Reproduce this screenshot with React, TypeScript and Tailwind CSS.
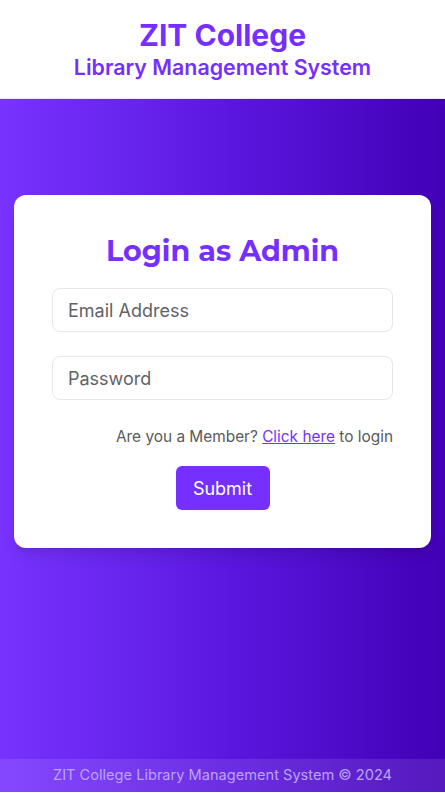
export default function App() {
  return (
    <div className="min-h-[793px] flex flex-col bg-white" style={{ fontFamily: "Inter, 'Liberation Sans', sans-serif" }}>
      {/* Header */}
      <header className="h-[99px] bg-white flex flex-col items-center justify-center border-b border-[#e9e4ff]">
        <h1 className="text-[30px] leading-[36px] font-bold text-[#7530ff] mt-[-2px]">ZIT College</h1>
        <h2 className="text-[21.4px] leading-[26px] font-semibold text-[#7530ff] mt-[1px]">Library Management System</h2>
      </header>

      <main className="flex-1 flex flex-col bg-linear-to-r from-[#7833ff] via-[#5c17e0] to-[#4200b6]">
        <div className="flex-1 px-[14px] pt-[96px]">
          <div className="bg-white rounded-[12px] h-[353px] flex flex-col items-center pt-[37px] shadow-lg">
            <h3
              className="text-[28.6px] leading-[38px] font-bold text-[#7530ff]"
              style={{ fontFamily: "Montserrat, 'Noto Sans', 'Open Sans', sans-serif" }}
            >
              Login as Admin
            </h3>
            <form className="w-[341px] mt-[18px] flex flex-col">
              <input
                type="email"
                placeholder="Email Address"
                className="h-[44px] rounded-[8px] border border-[#e5e7eb] px-[15px] text-[18px] placeholder:text-[#5f6368] outline-none"
              />
              <input
                type="password"
                placeholder="Password"
                className="h-[44px] mt-[24px] rounded-[8px] border border-[#e5e7eb] px-[15px] text-[18px] placeholder:text-[#5f6368] outline-none"
              />
              <p className="mt-[26px] text-right text-[15.4px] leading-[22px] text-[#5a5a5a]">
                Are you a Member?{" "}
                <a href="#" className="underline text-[#7530ff]">
                  Click here
                </a>{" "}
                to login
              </p>
              <div className="flex justify-center mt-[18px]">
                <button
                  type="button"
                  className="h-[44px] w-[94px] rounded-[6px] bg-[#7530ff] text-white text-[18px]"
                >
                  Submit
                </button>
              </div>
            </form>
          </div>
        </div>

        {/* Footer */}
        <footer className="h-[33px] bg-white/10 flex items-center justify-center text-[14.6px] text-[#bba3f7]">
          ZIT College Library Management System © 2024
        </footer>
      </main>
      <div className="h-px bg-white" />
    </div>
  );
}
